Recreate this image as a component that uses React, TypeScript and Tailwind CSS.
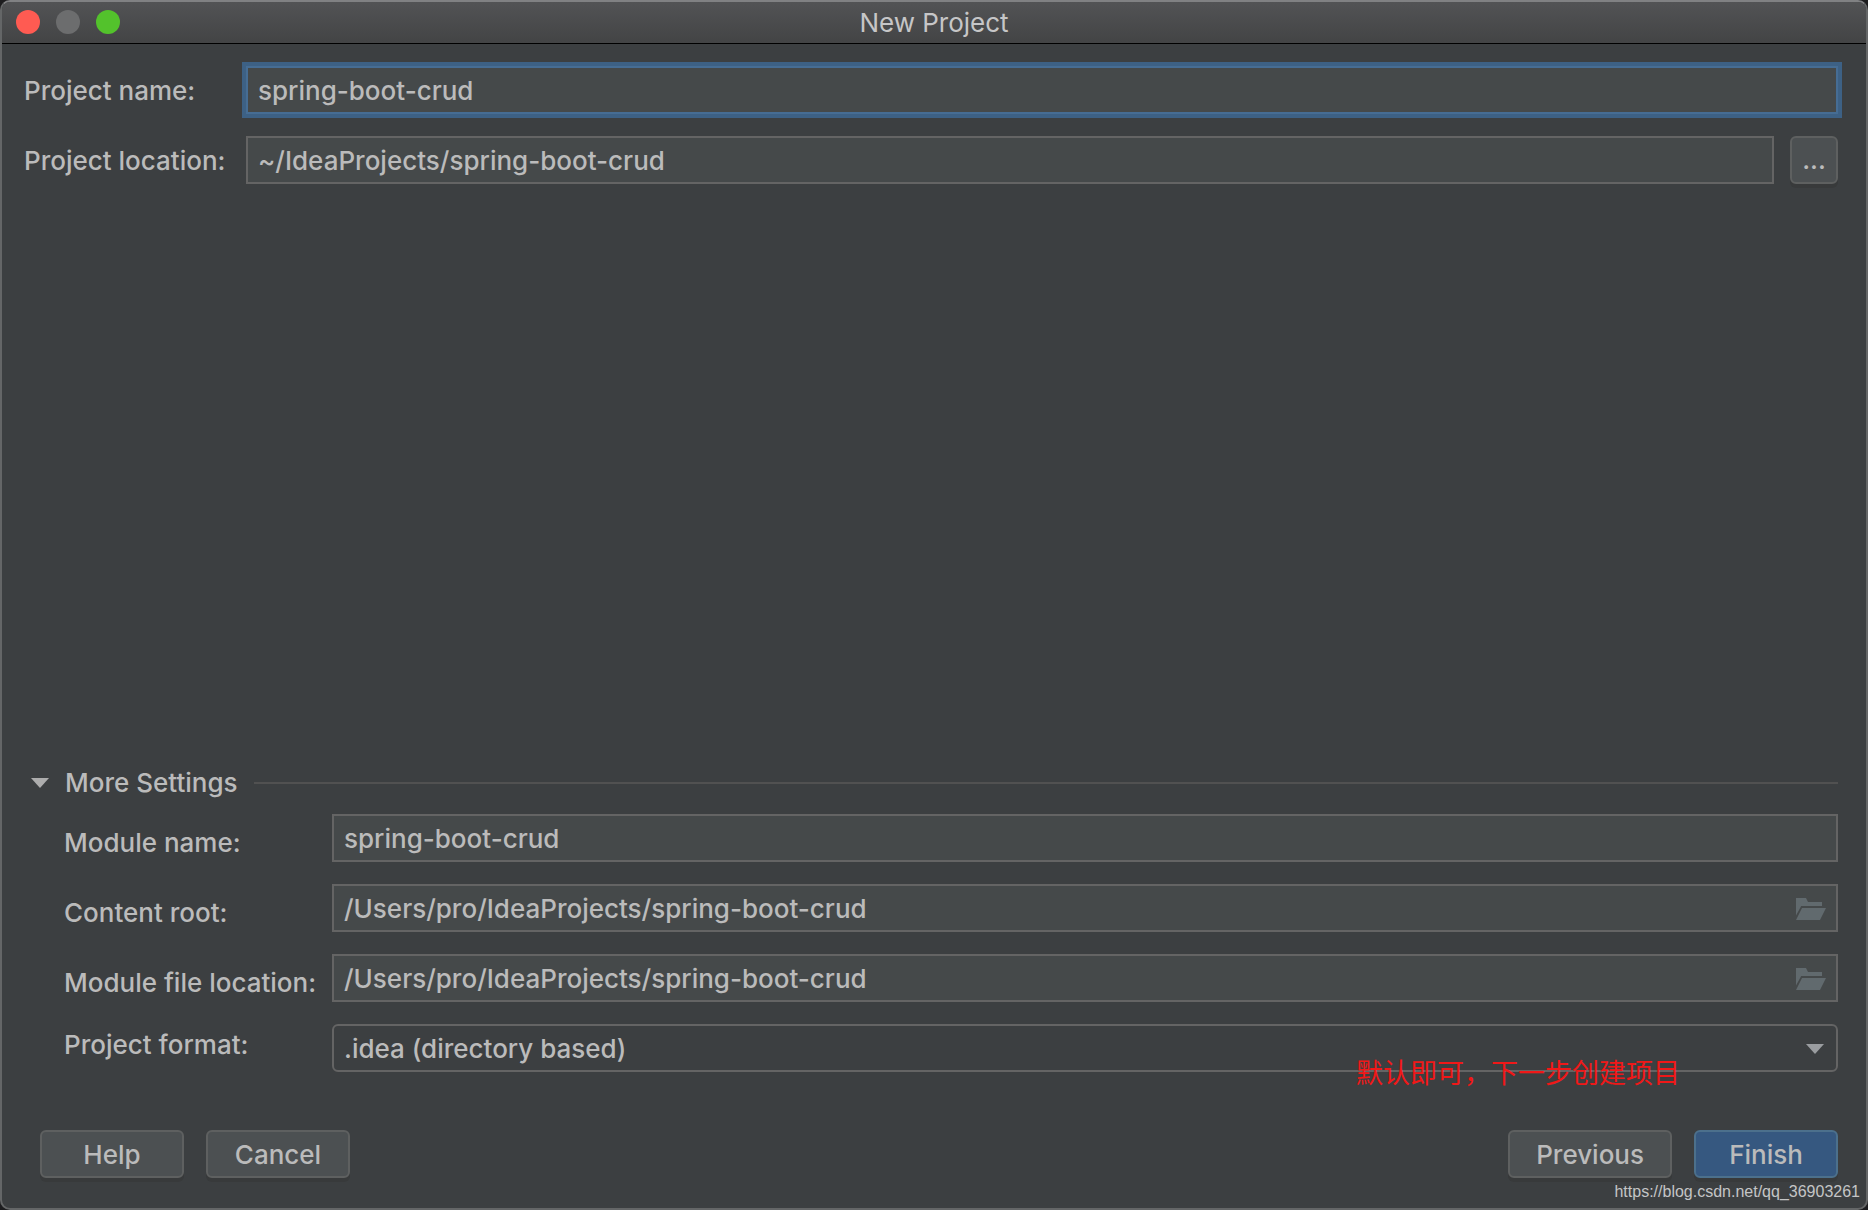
import React from 'react';

// Open folder glyph shown at the end of the path fields
const FolderIcon = () => (
  <svg width="32" height="32" viewBox="0 0 32 32" fill="#616a6e" aria-hidden="true">
    <path d="M2 6h10l2 4h14v4H7.200L2 23.500z" />
    <path d="M8 16h24l-6 12H2z" />
  </svg>
);

const Triangle = ({ color }: { color: string }) => (
  <svg width="18" height="10" viewBox="0 0 18 10" fill={color} aria-hidden="true">
    <path d="M0 0h18L9 10z" />
  </svg>
);

const TextField = ({ id, value, focused }: { id: string, value: string, focused?: boolean }) => (
  <input
    id={id}
    type="text"
    defaultValue={value}
    spellCheck={false}
    className={`w-full h-12 px-2.5 bg-[#45494a] border-2 text-[#bbbbbb] outline-none ${
      focused ? 'border-[#466d94] ring-4 ring-[#3d6185]' : 'border-[#646464]'
    }`}
  />
);

const PathField = ({ id, value }: { id: string, value: string }) => (
  <div className="relative">
    <TextField id={id} value={value} />
    <button type="button" aria-label="Browse" className="absolute right-3 top-2">
      <FolderIcon />
    </button>
  </div>
);

const DialogButton = ({ children, primary }: { children: string, primary?: boolean }) => (
  <button
    type="button"
    className={`h-12 min-w-36 px-[26px] pt-0.5 rounded-md border-2 shadow-[0_4px_0_#383a3b] ${
      primary ? 'bg-[#365880] border-[#4c708c]' : 'bg-[#4c5052] border-[#5e6060]'
    }`}
  >
    {children}
  </button>
);

export default function App() {
  return (
    <div className="min-h-screen flex bg-[#1d1d1f]">
      <div className="relative flex-1 flex flex-col rounded-[10px] overflow-hidden border-2 border-[#646667] border-t-[#808183] bg-[#3c3f41] text-[#bbbbbb] text-[26px] leading-8 font-medium font-['Inter','Noto_Sans_CJK_SC',sans-serif]">

        {/* Title bar */}
        <header className="relative h-[42px] flex items-center px-3.5 bg-linear-to-b from-[#525355] to-[#434445] border-b border-black">
          <div className="flex gap-4 pb-0.5">
            <button type="button" aria-label="Close" className="size-6 rounded-full bg-[#ff5b52]" />
            <button type="button" aria-label="Minimize" className="size-6 rounded-full bg-[#6c6d6e]" />
            <button type="button" aria-label="Zoom" className="size-6 rounded-full bg-[#53c22c]" />
          </div>
          <h1 className="absolute inset-x-0 text-center font-normal text-[#c6c6c7] pointer-events-none">New Project</h1>
        </header>

        <main className="flex-1 flex flex-col pt-[22px] pr-7 pb-[30px] pl-[22px]">
          <div className="grid grid-cols-[222px_1fr] gap-y-[22px] items-center">
            <label htmlFor="project-name" className="pt-0.5">Project name:</label>
            <TextField id="project-name" value="spring-boot-crud" focused />
            <label htmlFor="project-location" className="pt-0.5">Project location:</label>
            <div className="flex gap-4">
              <TextField id="project-location" value="~/IdeaProjects/spring-boot-crud" />
              <button type="button" className="size-12 shrink-0 rounded-md border-2 bg-[#4c5052] border-[#5e6060] shadow-[0_4px_0_#383a3b]">...</button>
            </div>
          </div>

          <div className="flex-1" />

          {/* More settings */}
          <section>
            <div className="flex items-center gap-4 pl-[7px]">
              <button type="button" aria-expanded="true" className="flex items-center gap-4">
                <Triangle color="#adadad" />
                More Settings
              </button>
              <div className="flex-1 h-0.5 bg-[#515151]" />
            </div>
            <div className="grid grid-cols-[268px_1fr] gap-y-[22px] pl-10 pt-[15px]">
              <label htmlFor="module-name" className="flex items-center pt-2.5">Module name:</label>
              <TextField id="module-name" value="spring-boot-crud" />
              <label htmlFor="content-root" className="flex items-center pt-2.5">Content root:</label>
              <PathField id="content-root" value="/Users/pro/IdeaProjects/spring-boot-crud" />
              <label htmlFor="module-location" className="flex items-center pt-2.5">Module file location:</label>
              <PathField id="module-location" value="/Users/pro/IdeaProjects/spring-boot-crud" />
              <label htmlFor="project-format" className="flex items-center pb-1.5">Project format:</label>
              <div className="relative">
                <select id="project-format" className="appearance-none w-full h-12 px-2.5 pt-0.5 rounded-md border-2 border-[#646464] bg-[#3c3f41] outline-none">
                  <option>.idea (directory based)</option>
                  <option>.ipr (file based)</option>
                </select>
                <div className="absolute right-3.5 top-5 pointer-events-none">
                  <Triangle color="#9a9da0" />
                </div>
                <p className="absolute right-[158px] top-8 text-[27px] leading-8 font-normal text-[#f01818] whitespace-nowrap pointer-events-none font-['Noto_Sans_CJK_SC',sans-serif]">默认即可，下一步创建项目</p>
              </div>
            </div>
          </section>

          {/* Actions */}
          <footer className="flex justify-between pt-[58px] pl-4">
            <div className="flex gap-[22px]">
              <DialogButton>Help</DialogButton>
              <DialogButton>Cancel</DialogButton>
            </div>
            <div className="flex gap-[22px]">
              <DialogButton>Previous</DialogButton>
              <DialogButton primary>Finish</DialogButton>
            </div>
          </footer>
        </main>

        <a
          href="https://blog.csdn.net/qq_36903261"
          className="absolute right-1.5 bottom-1.5 text-base leading-5 font-normal text-[#c4c5c6] font-['Liberation_Sans',sans-serif]"
        >
          https://blog.csdn.net/qq_36903261
        </a>
      </div>
    </div>
  );
}
